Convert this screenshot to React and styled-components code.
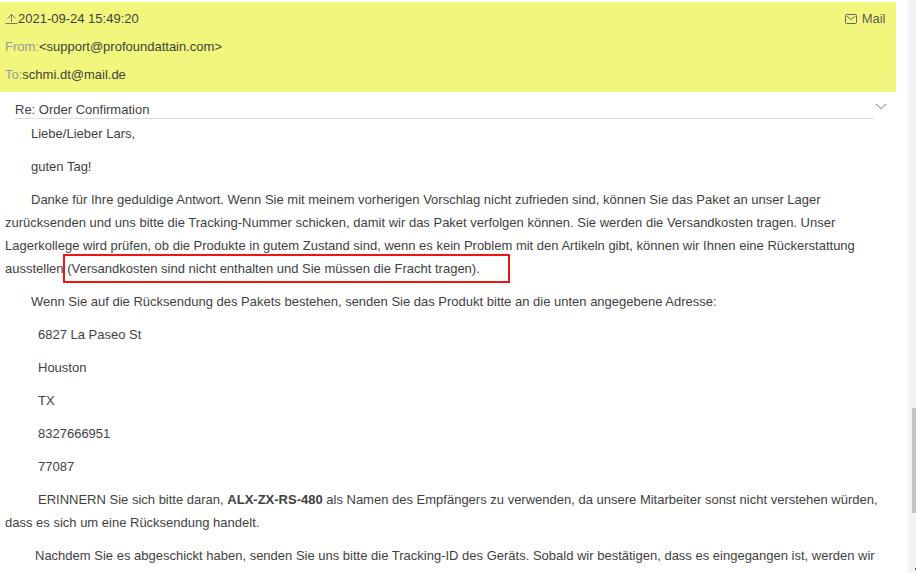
import React from "react";
import styled, { createGlobalStyle } from "styled-components";

const Global = createGlobalStyle`
  html, body { margin: 0; padding: 0; height: 100%; overflow: hidden; background: #fff; }
  #root { height: 100%; }
`;
const Page = styled.div`
  display: flex; width: 916px; height: 573px; overflow: hidden;
  font-family: "Liberation Sans", Arial, sans-serif; font-size: 13px; color: #3f3f3f;
`;
const Content = styled.main`
  width: 895.5px; flex: none; padding-top: 2px; box-sizing: border-box; display: flex; flex-direction: column;
  & > * { flex-shrink: 0; }
`;
const Gutter = styled.div`
  flex: 1; display: flex; justify-content: flex-end; background: #fff;
`;
const Band = styled.div`
  width: 4px; background: #fbfbfb;
`;
const Track = styled.div`
  position: relative; width: 7px; height: 100%; background: #f2f2f2;
`;
const Thumb = styled.div`
  position: absolute; top: 408px; left: 3px; width: 4px; height: 105px; background: #c4c4c4;
`;
const Dot = styled.div`
  position: absolute; top: 568px; left: 6px; width: 1px; height: 2px; background: #444;
`;
const Header = styled.header`
  height: 89.5px; background: #f1f77c; padding: 3px 10px 0 5px; box-sizing: border-box;
  display: flex; flex-direction: column;
`;
const HeaderRow = styled.div`
  height: 28px; flex: none; display: flex; align-items: center; justify-content: space-between; line-height: 28px;
`;
const Stamp = styled.div`display: flex; align-items: center;`;
const Line = styled.div``;
const Label = styled.span`color: #999;`;
const Mail = styled.div`display: flex; align-items: center; gap: 5px; color: #5c5c5c;`;
const SubjectRow = styled.div`
  position: relative; margin: 0 21.5px 0 15px; height: 27.5px; box-sizing: border-box;
  border-bottom: 1px solid #ddd; line-height: 35px; white-space: nowrap;
`;
const Chevron = styled.svg`
  position: absolute; right: -12px; top: 12px;
`;
const Body = styled.div`
  padding: 3px 10px 0 5px; line-height: 23px;
`;
const P = styled.p`
  margin: 0 0 10px; text-indent: ${p => p.$indent || 26}px;
`;
const Mark = styled.span`
  position: relative;
  &::after {
    content: ""; position: absolute; left: -4px; top: -7px; width: 447px; height: 29px;
    border: 2px solid #f01414; box-sizing: border-box;
  }
`;

export default function App() {
  return (
    <Page>
      <Global />
      <Content>
        <Header>
          <HeaderRow>
            <Stamp>
              <svg width="13" height="12" viewBox="0 0 13 12" fill="none" stroke="#777" strokeWidth="1">
                <path d="M2.5 5.5 L6.5 1.5 L10.5 5.5 M6.5 1.5 V9 M0.5 10.5 H12.5" />
              </svg>
              2021-09-24 15:49:20
            </Stamp>
            <Mail>
              <svg width="12" height="10" viewBox="0 0 12 10" fill="none" stroke="#666" strokeWidth="1">
                <rect x="0.5" y="0.5" width="11" height="9" rx="1" />
                <path d="M1.5 2 L6 5.5 L10.5 2" />
              </svg>
              Mail
            </Mail>
          </HeaderRow>
          <HeaderRow><Line><Label>From:</Label>&lt;support@profoundattain.com&gt;</Line></HeaderRow>
          <HeaderRow><Line><Label>To:</Label>schmi.dt@mail.de</Line></HeaderRow>
        </Header>
        <SubjectRow>
          Re: Order Confirmation
          <Chevron width="10" height="5" viewBox="0 0 10 5" fill="none" stroke="#777" strokeWidth="1">
            <path d="M0 0 L5 4.5 L10 0" />
          </Chevron>
        </SubjectRow>
        <Body>
          <P>Liebe/Lieber Lars,</P>
          <P>guten Tag!</P>
          <P>Danke für Ihre geduldige Antwort. Wenn Sie mit meinem vorherigen Vorschlag nicht zufrieden sind, können Sie das Paket an unser Lager zurücksenden und uns bitte die Tracking-Nummer schicken, damit wir das Paket verfolgen können. Sie werden die Versandkosten tragen. Unser Lagerkollege wird prüfen, ob die Produkte in gutem Zustand sind, wenn es kein Problem mit den Artikeln gibt, können wir Ihnen eine Rückerstattung ausstellen <Mark>(Versandkosten sind nicht enthalten und Sie müssen die Fracht tragen).</Mark></P>
          <P>Wenn Sie auf die Rücksendung des Pakets bestehen, senden Sie das Produkt bitte an die unten angegebene Adresse:</P>
          <P $indent={33}>6827 La Paseo St</P>
          <P $indent={33}>Houston</P>
          <P $indent={33}>TX</P>
          <P $indent={33}>8327666951</P>
          <P $indent={33}>77087</P>
          <P $indent={33}>ERINNERN Sie sich bitte daran, <b>ALX-ZX-RS-480</b> als Namen des Empfängers zu verwenden, da unsere Mitarbeiter sonst nicht verstehen würden, dass es sich um eine Rücksendung handelt.</P>
          <P $indent={30}>Nachdem Sie es abgeschickt haben, senden Sie uns bitte die Tracking-ID des Geräts. Sobald wir bestätigen, dass es eingegangen ist, werden wir</P>
        </Body>
      </Content>
      <Gutter><Band /><Track><Thumb /><Dot /></Track></Gutter>
    </Page>
  );
}
